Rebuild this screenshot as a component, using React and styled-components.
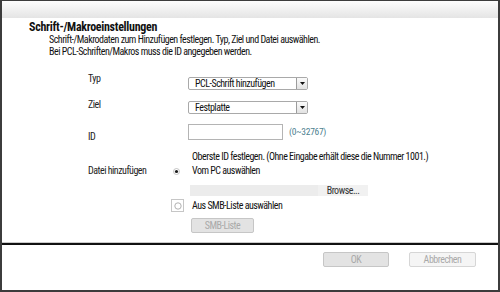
import React from 'react';
import styled, { createGlobalStyle } from 'styled-components';

const Global = createGlobalStyle`
  html, body { margin: 0; padding: 0; background: #ffffff; }
  body {
    font-family: Roboto, "Liberation Sans", sans-serif;
    font-stretch: condensed;
    font-size: 10px;
    letter-spacing: -0.5px;
    color: #161616;
  }
  * { box-sizing: border-box; }
`;

const Frame = styled.div`
  width: 500px;
  height: 292px;
  border: 2px solid #3c3c3c;
  border-top-width: 1px;
  display: flex;
  flex-direction: column;
  background: #fff;
`;

const Header = styled.div`
  height: 17px;
  flex: none;
  background: linear-gradient(#fdfdfd, #e4e4e4);
`;

const Content = styled.div`
  flex: 1;
  padding: 3px 0 0 27px;
`;

const Title = styled.div`
  font-size: 12px;
  font-weight: 700;
  line-height: 13px;
  letter-spacing: -0.3px;
  color: #111;
`;

const Desc = styled.div`
  padding-left: 20px;
  line-height: 12px;
  color: #111;
`;

const Form = styled.div`
  margin-top: 15px;
  padding-left: 59px;
  display: flex;
  flex-direction: column;
`;

const FieldRow = styled.div`
  display: flex;
  align-items: flex-start;
  height: ${p => p.h}px;
  padding-left: ${p => p.indent || 0}px;
  flex: none;
`;

const Label = styled.div`
  width: ${p => p.w || 100}px;
  flex: none;
  line-height: 12px;
  margin-top: ${p => p.mt || 0}px;
  color: #222;
`;

const Select = styled.div`
  width: 120px;
  height: 13px;
  margin-top: ${p => p.mt || 0}px;
  border: 1px solid #a9a9a9;
  border-radius: 2px;
  background: #fff;
  display: flex;
  align-items: stretch;
  justify-content: space-between;
  color: #111;
`;

const SelectText = styled.span`
  padding-left: 6px;
  line-height: 11px;
  white-space: nowrap;
`;

const ArrowBox = styled.span`
  width: 11px;
  flex: none;
  border-left: 1px solid #9c9c9c;
  background: linear-gradient(#fafafa, #e2e2e2);
  display: flex;
  align-items: center;
  justify-content: center;
`;

const Input = styled.div`
  width: 95px;
  height: 16px;
  margin-top: ${p => p.mt || 0}px;
  border: 1px solid #b4b4b4;
  background: #fff;
`;

const Range = styled.span`
  margin: 4px 0 0 6px;
  line-height: 12px;
  font-size: 9.5px;
  letter-spacing: -0.3px;
  color: #4d7f8f;
`;

const Line = styled.div`
  line-height: 12px;
  margin-top: ${p => p.mt || 0}px;
  margin-left: ${p => p.ml || 0}px;
  white-space: nowrap;
  color: #111;
`;

const RadioDot = styled.svg`
  width: 7px;
  height: 7px;
  flex: none;
  margin-top: 3px;
`;

const RadioFrame = styled.span`
  width: 13px;
  height: 13px;
  flex: none;
  border: 1px solid #c6c6c6;
  background: #fff;
  display: flex;
  align-items: center;
  justify-content: center;
`;

const PathBox = styled.div`
  width: 128px;
  height: 11px;
  background: #ececec;
`;

const BrowseBtn = styled.div`
  width: 50px;
  height: 11px;
  background: #f1f1f1;
  line-height: 11px;
  text-align: center;
  color: #333;
`;

const SmallButton = styled.div`
  width: ${p => p.w}px;
  height: 15px;
  border: 1px solid ${p => p.light ? '#d6d6d6' : '#c6c6c6'};
  border-radius: 2px;
  background: ${p => p.light ? '#f5f5f5' : '#e3e3e3'};
  color: #a9a9a9;
  line-height: 13px;
  text-align: center;
`;

const Separator = styled.div`
  flex: none;
  height: 3px;
  border-top: 1px solid #cacaca;
  border-bottom: 2px solid #111;
`;

const Footer = styled.div`
  height: 45px;
  flex: none;
  display: flex;
  justify-content: flex-end;
  align-items: flex-start;
  gap: 20px;
  padding: 7px 22px 0 0;
`;

const Triangle = () => (
  <svg width="5" height="3" viewBox="0 0 5 3"><path d="M0 0H5L2.5 3Z" fill="#111" /></svg>
);

export default function App() {
  return (
    <>
      <Global />
      <Frame>
        <Header />
        <Content>
          <Title>Schrift-/Makroeinstellungen</Title>
          <Desc>
            <div>Schrift-/Makrodaten zum Hinzufügen festlegen. Typ, Ziel und Datei auswählen.</div>
            <div>Bei PCL-Schriften/Makros muss die ID angegeben werden.</div>
          </Desc>
          <Form>
            <FieldRow h={26}>
              <Label>Typ</Label>
              <Select mt={4}>
                <SelectText>PCL-Schrift hinzufügen</SelectText>
                <ArrowBox><Triangle /></ArrowBox>
              </Select>
            </FieldRow>
            <FieldRow h={23}>
              <Label>Ziel</Label>
              <Select mt={2}>
                <SelectText>Festplatte</SelectText>
                <ArrowBox><Triangle /></ArrowBox>
              </Select>
            </FieldRow>
            <FieldRow h={29}>
              <Label mt={9}>ID</Label>
              <Input mt={2} />
              <Range>(0~32767)</Range>
            </FieldRow>
            <FieldRow h={14} indent={104}>
              <Line>Oberste ID festlegen. (Ohne Eingabe erhält diese die Nummer 1001.)</Line>
            </FieldRow>
            <FieldRow h={20}>
              <Label w={85}>Datei hinzufügen</Label>
              <RadioDot viewBox="0 0 7 7">
                <circle cx="3.5" cy="3.5" r="3" fill="#fff" stroke="#b5b5b5" strokeWidth="0.8" />
                <circle cx="3.5" cy="3.5" r="1.6" fill="#1a1a1a" />
              </RadioDot>
              <Line ml={12}>Vom PC auswählen</Line>
            </FieldRow>
            <FieldRow h={14} indent={102}>
              <PathBox />
              <BrowseBtn>Browse...</BrowseBtn>
            </FieldRow>
            <FieldRow h={19} indent={83}>
              <RadioFrame>
                <svg width="8" height="8" viewBox="0 0 8 8">
                  <circle cx="4" cy="4" r="3.2" fill="#fff" stroke="#a8a8a8" strokeWidth="0.9" />
                </svg>
              </RadioFrame>
              <Line ml={8} mt={1}>Aus SMB-Liste auswählen</Line>
            </FieldRow>
            <FieldRow h={16} indent={103}>
              <SmallButton w={63}>SMB-Liste</SmallButton>
            </FieldRow>
          </Form>
        </Content>
        <Separator />
        <Footer>
          <SmallButton w={66}>OK</SmallButton>
          <SmallButton w={67} light>Abbrechen</SmallButton>
        </Footer>
      </Frame>
    </>
  );
}
